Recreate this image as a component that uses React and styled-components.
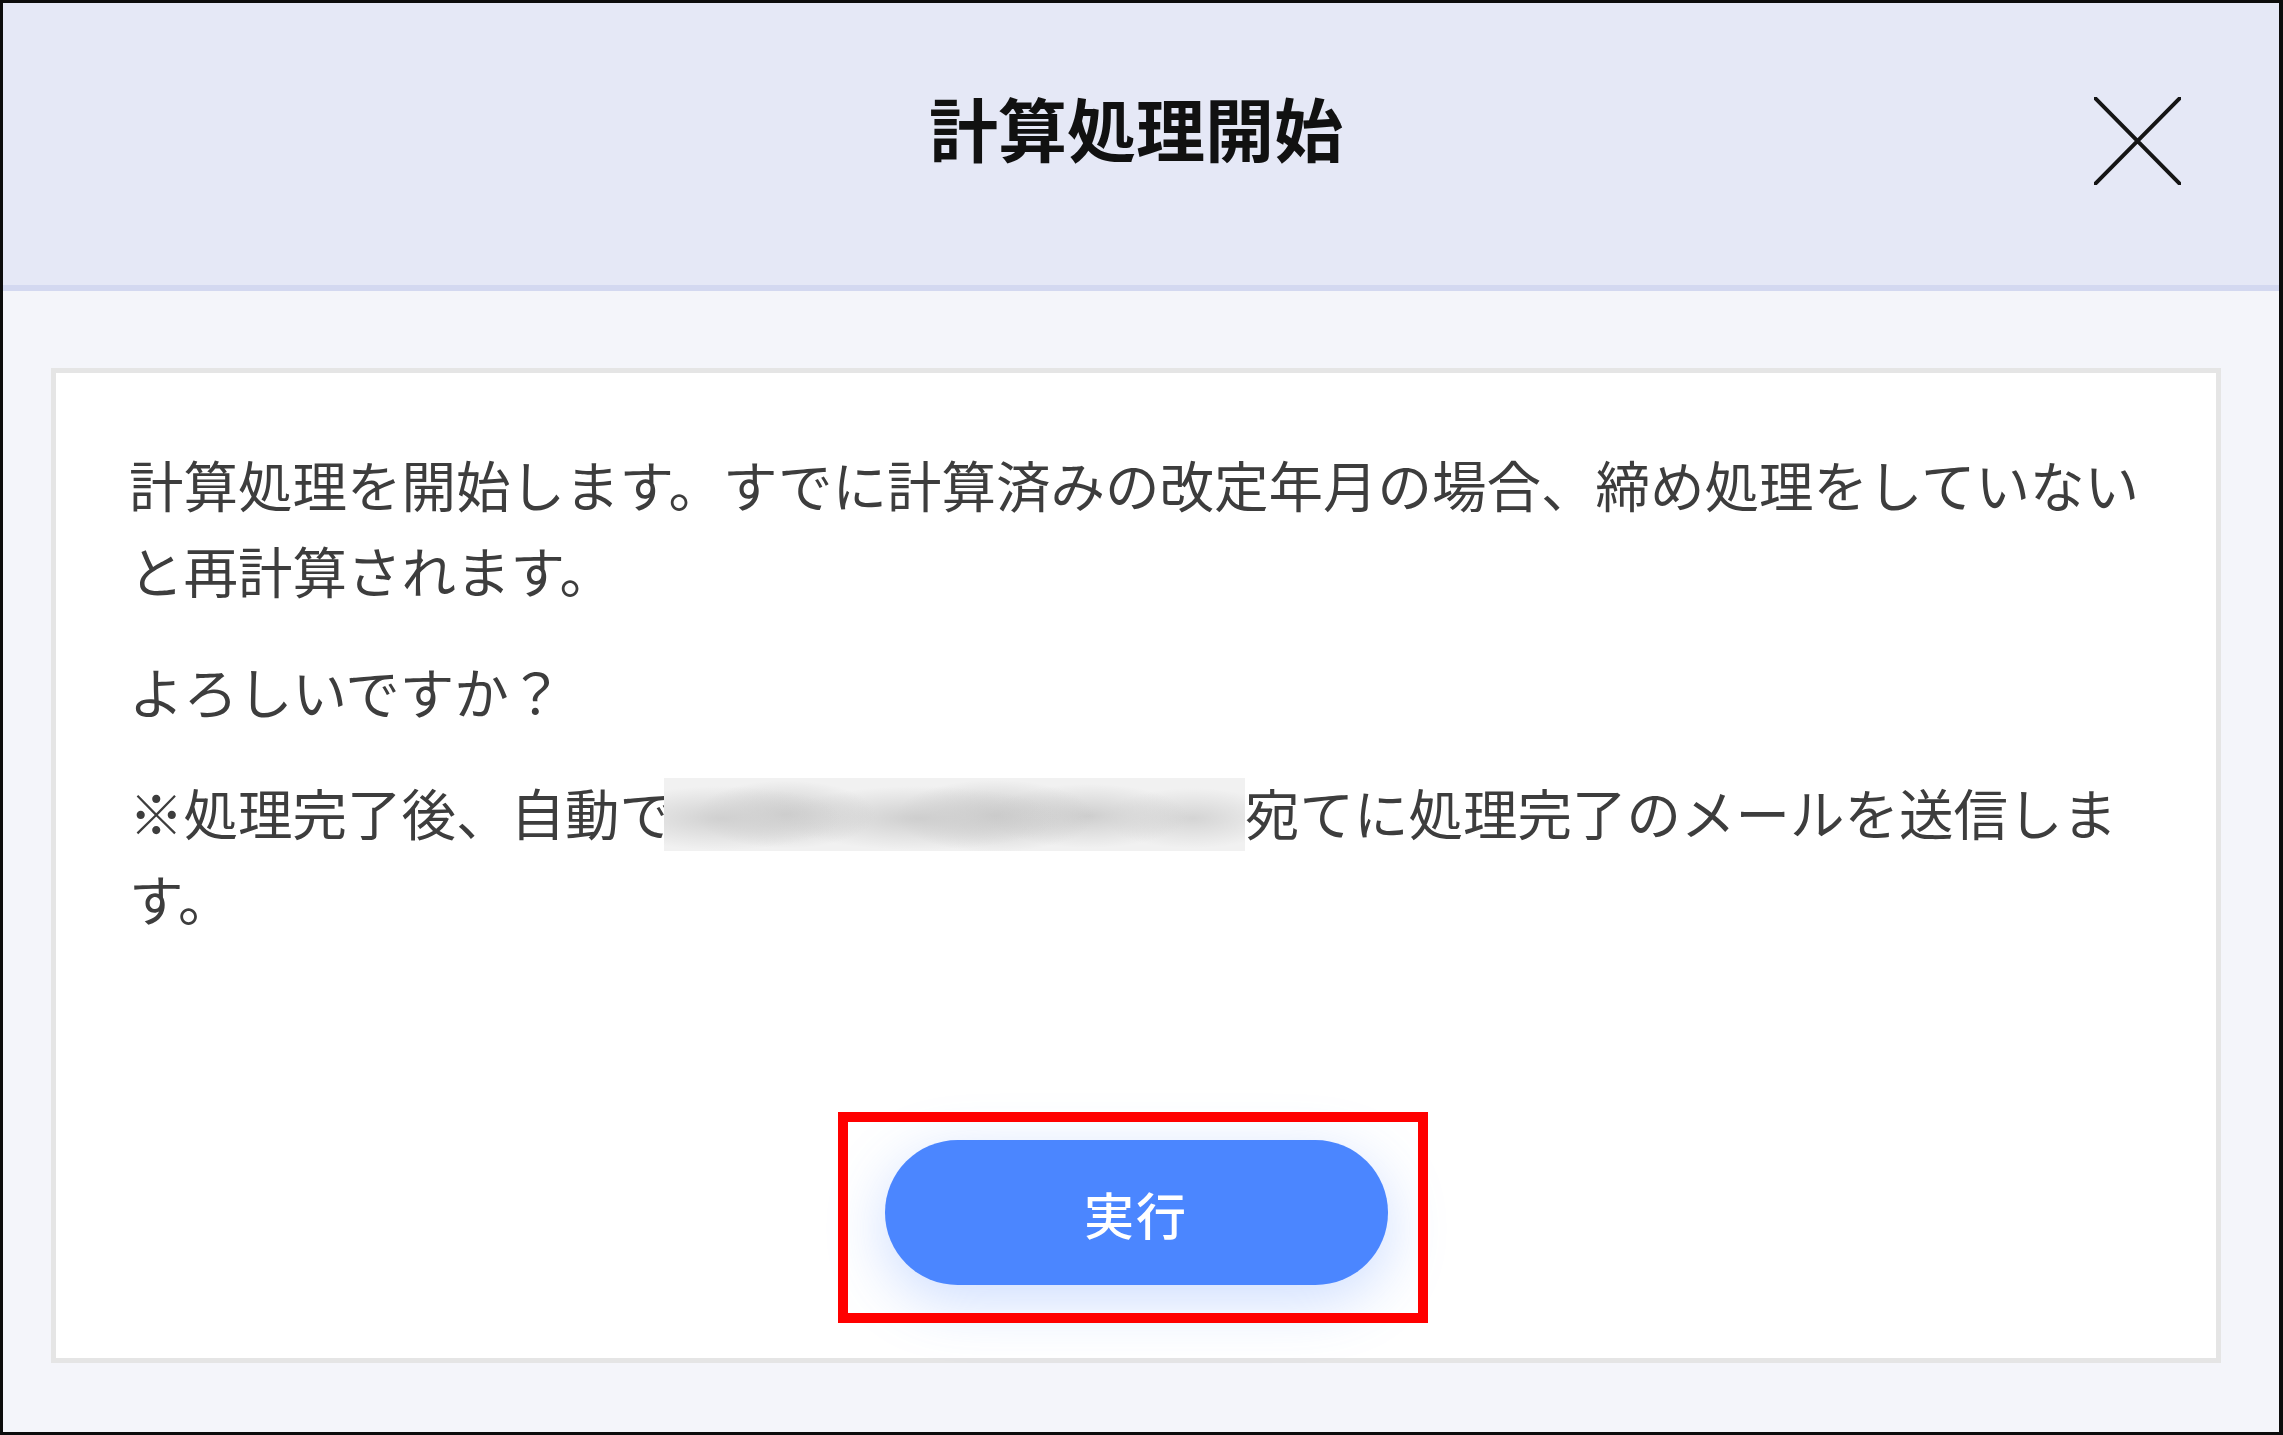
import React from 'react';
import styled, { createGlobalStyle } from 'styled-components';

const GlobalStyle = createGlobalStyle`
  * {
    box-sizing: border-box;
  }

  html, body {
    margin: 0;
    padding: 0;
    background: #ffffff;
  }

  body {
    font-family: "Noto Sans CJK JP", "Noto Sans", sans-serif;
  }
`;

const Frame = styled.div`
  width: 2283px;
  height: 1435px;
  border: 3px solid #0c0c0c;
  border-right-width: 4px;
  background-color: #f4f5fa;
  display: flex;
  flex-direction: column;
  overflow: hidden;
`;

const Header = styled.header`
  height: 288px;
  flex-shrink: 0;
  background-color: #e5e8f6;
  border-bottom: 6px solid #d3d8f0;
  display: grid;
  grid-template-columns: 1fr auto 1fr;
  align-items: center;
  padding: 0 98px;
`;

const Title = styled.h1`
  grid-column: 2;
  margin: 0 10px 34px 0;
  font-size: 69px;
  line-height: 1;
  font-weight: 700;
  color: #111111;
`;

const CloseButton = styled.button`
  grid-column: 3;
  justify-self: end;
  width: 87px;
  height: 88px;
  margin-bottom: 6px;
  padding: 0;
  border: none;
  background: transparent;
  cursor: pointer;
  display: flex;
  align-items: center;
  justify-content: center;

  svg {
    width: 87px;
    height: 88px;
    display: block;
  }
`;

const Body = styled.main`
  flex: 1;
  padding: 77px 58px 69px 48px;
  display: flex;
`;

const Card = styled.section`
  flex: 1;
  background-color: #ffffff;
  border: 5px solid #e5e5e5;
  padding: 68px 0 73px;
  display: flex;
  flex-direction: column;
`;

const Message = styled.div`
  padding: 0 58px 0 73px;
`;

const Paragraph = styled.p`
  margin: 0 0 35px;
  font-size: 54.5px;
  line-height: 86px;
  color: #3d3d3d;
  font-weight: 400;

  &:last-child {
    margin-bottom: 0;
  }
`;

const Redacted = styled.span`
  display: inline-block;
  width: 581px;
  height: 73px;
  margin-left: -10px;
  vertical-align: -16px;
  background-color: #f1f1f1;
  background-image:
    radial-gradient(ellipse 120px 32px at 10% 55%, #d0d0d0 0%, rgba(208, 208, 208, 0) 100%),
    radial-gradient(ellipse 90px 34px at 21% 50%, #cbcbcb 0%, rgba(203, 203, 203, 0) 100%),
    radial-gradient(ellipse 140px 32px at 44% 55%, #cecece 0%, rgba(206, 206, 206, 0) 100%),
    radial-gradient(ellipse 100px 36px at 57% 52%, #c8c8c8 0%, rgba(200, 200, 200, 0) 100%),
    radial-gradient(ellipse 100px 32px at 73% 52%, #cecece 0%, rgba(206, 206, 206, 0) 100%),
    radial-gradient(ellipse 90px 30px at 91% 55%, #d4d4d4 0%, rgba(212, 212, 212, 0) 100%);
`;

const Actions = styled.div`
  margin-top: auto;
  display: flex;
  justify-content: center;
`;

const Highlight = styled.div`
  position: relative;

  &::after {
    content: '';
    position: absolute;
    top: -28px;
    bottom: -38px;
    left: -47px;
    right: -40px;
    border: 10px solid #ff0000;
    pointer-events: none;
  }
`;

const PrimaryButton = styled.button`
  width: 503px;
  height: 145px;
  border: none;
  border-radius: 73px;
  background-color: #4b86ff;
  color: #ffffff;
  font-family: "Noto Sans CJK JP", sans-serif;
  font-size: 50px;
  font-weight: 500;
  letter-spacing: 2px;
  cursor: pointer;
  box-shadow: 0 16px 60px rgba(75, 134, 255, 0.28);
  display: flex;
  align-items: center;
  justify-content: center;
`;

function CloseIcon() {
  return (
    <svg viewBox="0 0 87 88" fill="none">
      <path
        d="M1 1 L86 87 M86 1 L1 87"
        stroke="#151515"
        strokeWidth="4"
        strokeLinecap="round"
      />
    </svg>
  );
}

export default function App() {
  return (
    <>
      <GlobalStyle />
      <Frame>
        <Header>
          <Title>計算処理開始</Title>
          <CloseButton aria-label="閉じる">
            <CloseIcon />
          </CloseButton>
        </Header>
        <Body>
          <Card>
            <Message>
              <Paragraph>
                計算処理を開始します。すでに計算済みの改定年月の場合、締め処理をしていないと再計算されます。
              </Paragraph>
              <Paragraph>よろしいですか？</Paragraph>
              <Paragraph>
                ※処理完了後、自動で<Redacted aria-hidden="true" />宛てに処理完了のメールを送信します。
              </Paragraph>
            </Message>
            <Actions>
              <Highlight>
                <PrimaryButton>実行</PrimaryButton>
              </Highlight>
            </Actions>
          </Card>
        </Body>
      </Frame>
    </>
  );
}
